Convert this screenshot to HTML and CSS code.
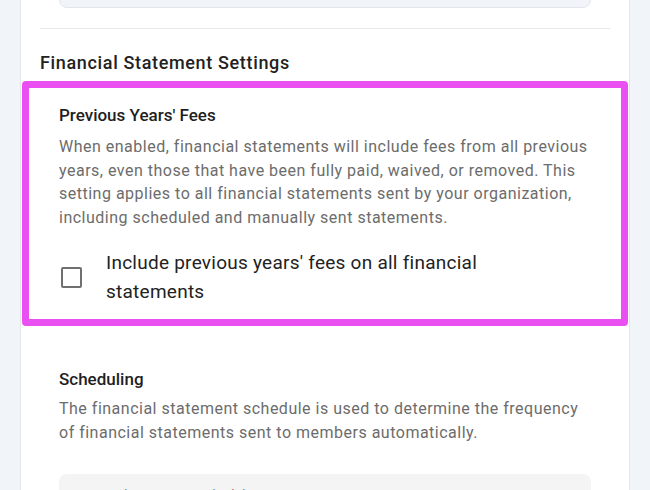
FILE: index.html
```html
<!DOCTYPE html>
<html lang="en">
<head>
    <meta charset="UTF-8">
    <meta name="viewport" content="width=device-width, initial-scale=1.0">
    <title>Financial Statement Settings</title>
    <link rel="stylesheet" href="styles.css">
</head>
<body>
    <div class="card">
        <div class="field field-top"></div>
        <div class="divider"></div>

        <h2 class="group-title">Financial Statement Settings</h2>

        <div class="setting highlight">
            <h3 class="setting-title">Previous Years' Fees</h3>
            <p class="setting-desc">When enabled, financial statements will include fees from all previous years, even those that have been fully paid, waived, or removed. This setting applies to all financial statements sent by your organization, including scheduled and manually sent statements.</p>
            <label class="check-row">
                <span class="checkbox"></span>
                <span class="check-label">Include previous years' fees on all financial statements</span>
            </label>
        </div>

        <div class="setting">
            <h3 class="setting-title">Scheduling</h3>
            <p class="setting-desc tight">The financial statement schedule is used to determine the frequency of financial statements sent to members automatically.</p>
            <div class="field field-select">
                <span class="field-label">Financial Statement Schedule</span>
            </div>
        </div>
    </div>
</body>
</html>
```

FILE: styles.css
```css
html {
    background-color: #f1f4f9; /* page backdrop */
}
body {
    margin: 0;
    padding: 0 20px;
    height: 490px;
    overflow: hidden;
    font-family: Roboto, "Noto Sans", Arial, sans-serif;
    color: #212121;
}
.card {
    background: #fff;
    border-left: 1px solid #e3e6eb;
    border-right: 1px solid #e3e6eb;
    padding: 0 19px;
    min-height: 100%;
}
.field {
    margin: 0 19px;
    border-radius: 8px;
}
.field-top {
    height: 40px;
    margin-top: -34px; /* scrolled past, only the bottom edge shows */
    background: #f1f4f9;
    border: 1px solid #e2e6ec;
}
.divider {
    margin-top: 20px;
    border-top: 1px solid #e6e8eb;
}
.group-title {
    margin: 22px 0 0;
    font-size: 18px;
    line-height: 24px;
    font-weight: 500;
    letter-spacing: 0.65px;
    color: #222;
}
.setting {
    padding: 0 19px;
}
.highlight {
    margin: 6px -18px 0;
    padding: 15px 22px 13px 30px;
    border: 7px solid #e94ff1;
    border-radius: 4px;
}
.setting-title {
    margin: 0;
    font-size: 17px;
    line-height: 24px;
    font-weight: 500;
    color: #1f1f1f;
}
.setting-desc {
    margin: 8px 0 0;
    font-size: 16px;
    line-height: 23.5px;
    letter-spacing: 0.5px;
    color: #6c6c6c;
}
.setting-desc.tight {
    margin-top: 6px;
    line-height: 24px;
}
.check-row {
    display: flex;
    align-items: center;
    gap: 24px;
    margin-top: 19px;
    cursor: pointer;
}
.checkbox {
    flex: none;
    width: 17px;
    height: 17px;
    margin-left: 2px;
    border: 2px solid #707070;
    border-radius: 2px;
}
.check-label {
    max-width: 410px;
    font-size: 19px;
    line-height: 29px;
    letter-spacing: 0.25px;
    color: #222;
}
.setting + .setting {
    margin-top: 41px;
}
.field-select {
    margin: 29px 0 0;
    height: 50px;
    padding: 10px 14px 0;
    background: #f4f4f4;
    border-radius: 8px;
}
.field-label {
    font-size: 13px;
    letter-spacing: 0.3px;
    color: #7a7a7a;
}
```
